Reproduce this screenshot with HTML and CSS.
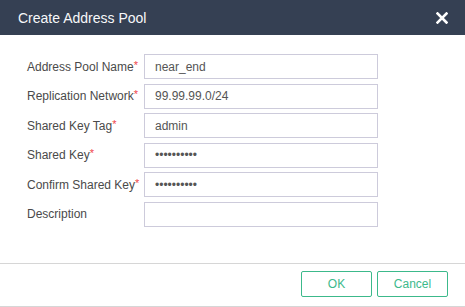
FILE: index.html
```html
<!DOCTYPE html>
<html lang="en">
  <head>
    <meta charset="UTF-8" />
    <title>Create Address Pool</title>
    <link rel="stylesheet" href="styles.css">
  </head>
  <body>
    <div class="dialog">
      <div class="dialog-header">
        <h1>Create Address Pool</h1>
        <button class="close-btn" aria-label="Close">
          <svg width="12" height="12" viewBox="0 0 12 12">
            <path d="M1.5 1.5 L10.5 10.5 M10.5 1.5 L1.5 10.5" stroke="#fff" stroke-width="2.6" stroke-linecap="square" />
          </svg>
        </button>
      </div>
      <form class="dialog-body">
        <div class="form-row">
          <label for="poolName">Address Pool Name<span class="req">*</span></label>
          <input type="text" id="poolName" class="form-control" value="near_end" />
        </div>
        <div class="form-row">
          <label for="network">Replication Network<span class="req">*</span></label>
          <input type="text" id="network" class="form-control" value="99.99.99.0/24" />
        </div>
        <div class="form-row">
          <label for="keyTag">Shared Key Tag<span class="req">*</span></label>
          <input type="text" id="keyTag" class="form-control" value="admin" />
        </div>
        <div class="form-row">
          <label for="sharedKey">Shared Key<span class="req">*</span></label>
          <input type="password" id="sharedKey" class="form-control" value="0123456789" />
        </div>
        <div class="form-row">
          <label for="confirmKey">Confirm Shared Key<span class="req">*</span></label>
          <input type="password" id="confirmKey" class="form-control" value="0123456789" />
        </div>
        <div class="form-row">
          <label for="description">Description</label>
          <input type="text" id="description" class="form-control" />
        </div>
      </form>
      <div class="dialog-footer">
        <button class="btn">OK</button>
        <button class="btn">Cancel</button>
      </div>
    </div>
  </body>
</html>
```
FILE: styles.css
```css
* {
  margin: 0;
  padding: 0;
  box-sizing: border-box;
}
body {
  font-family: "Liberation Sans", Arial, sans-serif;
  background-color: #fff;
}
.dialog {
  width: 465px;
  height: 307px;
  background: #fff;
  display: flex;
  flex-direction: column;
}
.dialog-header {
  height: 35px;
  background-color: #354053;
  display: flex;
  justify-content: space-between;
  align-items: center;
  padding: 0 17px 0 18px;
}
.dialog-header h1 {
  font-size: 14px;
  font-weight: normal;
  color: #f7f8fa;
}
.close-btn {
  width: 12px;
  height: 12px;
  border: none;
  background: none;
  display: flex;
  cursor: pointer;
}
.dialog-body {
  flex: 1;
  padding: 19px 0 0 27px;
  display: flex;
  flex-direction: column;
  gap: 4.6px;
}
.form-row {
  display: flex;
  align-items: center;
  height: 25px;
}
.form-row label {
  width: 117px;
  font-size: 12px;
  color: #4a4a4a;
}
.req {
  color: #f0464a;
  font-size: 11px;
  position: relative;
  top: -2px;
}
.form-control {
  width: 234px;
  height: 25px;
  border: 1px solid #cdcbdb;
  padding: 0 10px;
  font-family: inherit;
  font-size: 12px;
  color: #555;
  outline: none;
}
.dialog-footer {
  border-top: 1px solid #d6d6d6;
  border-bottom: 1px solid #d6d6d6;
  height: 44px;
  display: flex;
  justify-content: flex-end;
  gap: 5px;
  padding: 7px 17px 0 0;
}
.btn {
  width: 71px;
  height: 26px;
  border: 1px solid #3cb98b;
  border-radius: 2px;
  background: #fff;
  color: #3cb98b;
  font-family: inherit;
  font-size: 12px;
  cursor: pointer;
}
```
